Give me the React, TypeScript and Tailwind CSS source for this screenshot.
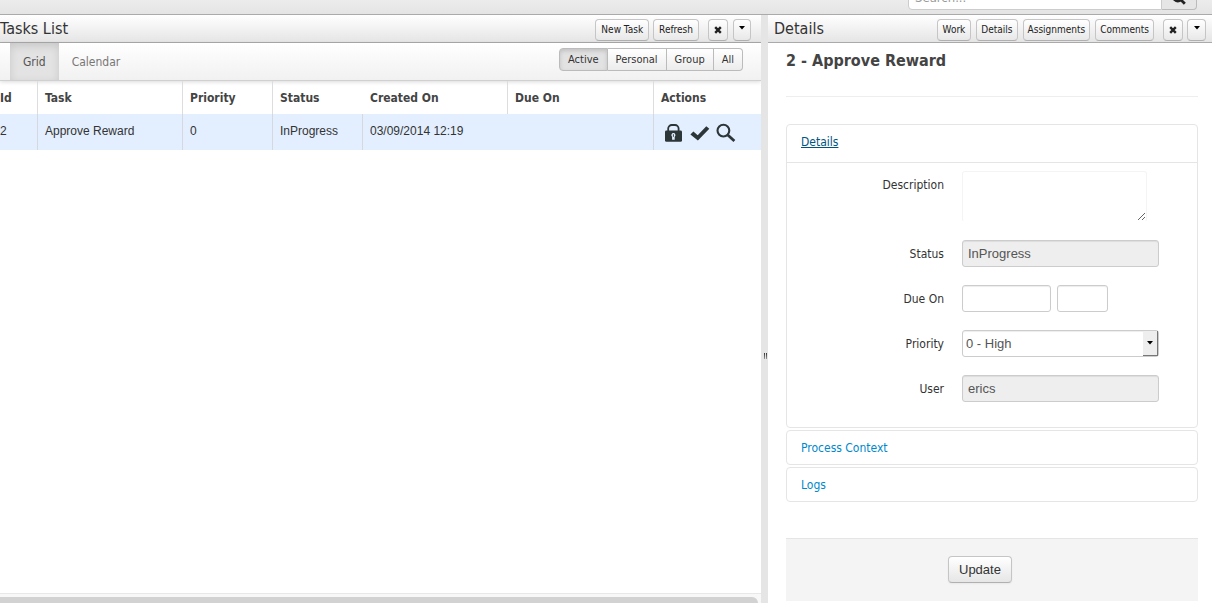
import type { ReactNode } from "react";

const ui = "font-['DejaVu_Sans_Condensed','DejaVu_Sans',sans-serif]";
const arial = "font-['Liberation_Sans',Arial,sans-serif]";

function Caret() {
  return (
    <svg className="h-1 w-[6px]" viewBox="0 0 6 4" aria-hidden="true">
      <path d="M0 0h6L3 3.5z" fill="#000" />
    </svg>
  );
}

function CloseIcon() {
  return (
    <svg className="h-2 w-2" viewBox="0 0 8 8" aria-hidden="true">
      <path d="M1.2 1.2l5.6 5.6M6.8 1.2L1.2 6.8" stroke="#222" strokeWidth="2.4" />
    </svg>
  );
}

function LockIcon() {
  return (
    <svg className="h-5 w-5" viewBox="0 0 20 20" aria-hidden="true">
      <path d="M4.2 9V5.6A3.6 3.6 0 0 1 7.8 2h3.2a3.6 3.6 0 0 1 3.6 3.6V9" fill="none" stroke="#2c3537" strokeWidth="1.8" />
      <rect x="1" y="7.6" width="17" height="11.2" rx="1.4" fill="#2c3537" />
      <path d="M9.4 10a2.1 2.1 0 0 1 1.3 3.7v3.1H8.1v-3.1A2.1 2.1 0 0 1 9.4 10z" fill="#e3efff" />
      <path d="M9.4 11.2v2.6" stroke="#2c3537" strokeWidth=".9" />
    </svg>
  );
}

function CheckIcon() {
  return (
    <svg className="h-5 w-5" viewBox="0 0 20 20" aria-hidden="true">
      <path d="M.4 11.4l3-2.8 4.3 3.7 8.6-9.1 3 2.5L7.9 17.6z" fill="#2c3537" />
    </svg>
  );
}

function SearchIcon() {
  return (
    <svg className="h-5 w-5" viewBox="0 0 20 20" aria-hidden="true">
      <circle cx="7.4" cy="7.6" r="5.9" fill="none" stroke="#2c3537" strokeWidth="2.1" />
      <path d="M11.8 12l6.6 6" stroke="#2c3537" strokeWidth="2.8" />
    </svg>
  );
}

function SmallButton({ children, label, className = "px-1" }: { children: ReactNode; label?: string; className?: string }) {
  return (
    <button
      type="button"
      aria-label={label}
      className={`flex h-[22px] items-center justify-center rounded border border-[#c5c5c5] border-b-[#b0b0b0] bg-linear-to-b from-white to-[#e8e8e8] text-[10px] leading-4 text-[#222] ${className}`}
    >
      {children}
    </button>
  );
}

function PaneHeader({ title, children, className }: { title: string; children: ReactNode; className: string }) {
  return (
    <header className={`flex h-7 shrink-0 items-center border-b border-[#aaa] bg-linear-to-b from-white to-[#e5e5e5] ${className}`}>
      <h2 className="flex-1 pt-px text-base leading-5 text-[#333]">{title}</h2>
      <div className="flex items-center pt-[3px]">{children}</div>
    </header>
  );
}

function Field({ id, label, children }: { id: string; label: string; children: ReactNode }) {
  return (
    <div className="flex gap-[18px]">
      <label htmlFor={id} className="w-[157px] shrink-0 pt-1 text-right text-xs leading-5 text-[#333]">
        {label}
      </label>
      {children}
    </div>
  );
}

const box = "h-[27px] rounded-[3px] border border-[#ccc] text-[13px] text-[#555] shadow-[inset_0_1px_1px_rgba(0,0,0,0.075)]";

const columns = [
  { name: "Id", width: "w-[38px]", value: "2", head: "border-r", cell: "border-r" },
  { name: "Task", width: "w-[145px]", value: "Approve Reward", head: "pl-[7px] border-r", cell: "pl-[7px] border-r" },
  { name: "Priority", width: "w-[90px]", value: "0", head: "pl-[7px] border-r", cell: "pl-[7px] border-r" },
  { name: "Status", width: "w-[90px]", value: "InProgress", head: "pl-[7px]", cell: "pl-[7px] border-r" },
  { name: "Created On", width: "w-[145px]", value: "03/09/2014 12:19", head: "pl-[7px] border-r", cell: "pl-[7px]" },
  { name: "Due On", width: "w-[146px]", value: "", head: "pl-[7px] border-r", cell: "pl-[7px] border-r" },
];

const filters = [
  { name: "Active", style: "rounded-l bg-[#e2e2e2] shadow-[inset_0_2px_4px_rgba(0,0,0,0.15)]" },
  { name: "Personal", style: "border-l-0 bg-linear-to-b from-white to-[#ececec]" },
  { name: "Group", style: "border-l-0 bg-linear-to-b from-white to-[#ececec]" },
  { name: "All", style: "border-l-0 rounded-r bg-linear-to-b from-white to-[#ececec]" },
];

export default function App() {
  return (
    <div className={`flex h-screen flex-col overflow-hidden bg-white ${ui}`}>
      <form className="flex h-[15px] shrink-0 items-end justify-end overflow-hidden border-b border-[#aaa] bg-linear-to-b from-[#ececec] to-[#e4e4e4] pr-[15px] pb-1">
        <input
          type="search"
          aria-label="Search"
          placeholder="Search..."
          className="h-7 w-[254px] shrink-0 rounded-l border border-[#ccc] bg-white px-[6px] pt-[2px] text-[13px] placeholder:text-[#999]"
        />
        <button
          type="button"
          aria-label="Run search"
          className="flex h-7 w-[35px] shrink-0 items-center justify-center rounded-r border border-l-0 border-[#bbb] bg-[#e6e6e6] pt-[3px]"
        >
          <svg className="h-[14px] w-[14px]" viewBox="0 0 12 12" aria-hidden="true">
            <circle cx="5" cy="5" r="3.8" fill="none" stroke="#222" strokeWidth="2" />
            <path d="M7.6 7.6l3.4 3.4" stroke="#222" strokeWidth="2.4" />
          </svg>
        </button>
      </form>

      <div className="grid min-h-0 flex-1 grid-cols-[minmax(0,1fr)_7px_444px]">
        <main className="flex min-h-0 flex-col">
          <PaneHeader title="Tasks List" className="pr-[10px]">
            <div className="flex gap-1">
              <SmallButton className="px-[5px]">New Task</SmallButton>
              <SmallButton className="px-[5px]">Refresh</SmallButton>
            </div>
            <div className="flex gap-[5px] pl-[9px]">
              <SmallButton label="Close" className="w-5">
                <CloseIcon />
              </SmallButton>
              <SmallButton label="More" className="w-[18px] pb-1">
                <Caret />
              </SmallButton>
            </div>
          </PaneHeader>

          <div className="flex h-[38px] shrink-0 items-center border-b border-[#d0d0d0] bg-linear-to-b from-white to-[#f1f1f1] pr-[18px] pl-[10px] shadow-[0_1px_4px_rgba(0,0,0,0.15)]">
            <nav className="flex flex-1 self-stretch text-xs text-[#777]">
              <a href="#grid" className="flex items-center bg-[#e3e3e3] px-[13px] text-[#555] shadow-[inset_0_3px_8px_rgba(0,0,0,0.125)]">
                Grid
              </a>
              <a href="#calendar" className="flex items-center px-[13px]">
                Calendar
              </a>
            </nav>
            <div className="flex pb-1">
              {filters.map((f) => (
                <button key={f.name} type="button" className={`h-[23px] border border-[#bbb] px-2 text-[11px] leading-4 text-[#333] ${f.style}`}>
                  {f.name}
                </button>
              ))}
            </div>
          </div>

          <div className="min-h-0 flex-1">
            <table className="w-full table-fixed border-separate border-spacing-0 text-left">
              <thead>
                <tr className="h-[33px] text-xs text-[#444]">
                  {columns.map((c) => (
                    <th key={c.name} className={`border-[#ddd] font-bold ${c.width} ${c.head}`}>
                      {c.name}
                    </th>
                  ))}
                  <th className="pl-[7px] font-bold">Actions</th>
                </tr>
              </thead>
              <tbody>
                <tr className={`h-9 bg-[#e3efff] text-xs text-[#333] ${arial}`}>
                  {columns.map((c) => (
                    <td key={c.name} className={`border-[#d5d9df] pb-[2px] ${c.cell}`}>
                      {c.value}
                    </td>
                  ))}
                  <td className="pl-[10px]">
                    <div className="flex gap-[6px] pt-px">
                      <button type="button" aria-label="Release">
                        <LockIcon />
                      </button>
                      <button type="button" aria-label="Complete">
                        <CheckIcon />
                      </button>
                      <button type="button" aria-label="View">
                        <SearchIcon />
                      </button>
                    </div>
                  </td>
                </tr>
              </tbody>
            </table>
          </div>

          <div className="h-[10px] shrink-0 overflow-hidden border-t border-[#e8e8e8] bg-[#f8f8f8] pt-[3px] pr-[3px]">
            <div className="h-3 rounded-r-full bg-[#d2d2d2]" />
          </div>
        </main>

        <div className="flex items-center justify-center bg-[#e5e5e5] pt-[94px] pl-px">
          <div className="flex gap-px">
            <span className="h-[6px] w-px bg-linear-to-b from-[#333] to-[#999]" />
            <span className="h-[6px] w-px bg-linear-to-b from-[#333] to-[#999]" />
          </div>
        </div>

        <aside className="flex min-h-0 flex-col overflow-hidden">
          <PaneHeader title="Details" className="pr-[6px] pl-[6px]">
            <div className="flex gap-[5px]">
              <SmallButton className="px-[5px]">Work</SmallButton>
              <SmallButton>Details</SmallButton>
              <SmallButton>Assignments</SmallButton>
              <SmallButton>Comments</SmallButton>
            </div>
            <div className="flex gap-1 pl-[9px]">
              <SmallButton label="Close" className="w-5">
                <CloseIcon />
              </SmallButton>
              <SmallButton label="More" className="w-[19px] pb-1">
                <Caret />
              </SmallButton>
            </div>
          </PaneHeader>

          <div className="flex flex-col pr-[14px] pl-[18px]">
            <h3 className="border-b border-[#eee] pt-2 pb-[25px] text-base leading-5 font-bold text-[#444]">2 - Approve Reward</h3>

            <div className="mt-[27px] flex flex-col gap-[2px] text-xs leading-5 text-[#0088cc]">
              <section className="rounded border border-[#e5e5e5]">
                <div className="border-b border-[#e5e5e5] px-[14px] pt-[7px] pb-[10px]">
                  <a href="#details" className="text-[#005580] underline">
                    Details
                  </a>
                </div>
                <form className="flex flex-col gap-[18px] pt-2 pb-[25px]">
                  <Field id="description" label="Description">
                    <textarea id="description" className="h-[51px] w-[185px] resize rounded-[3px] border border-[#f4f4f4] border-b-transparent" />
                  </Field>
                  <Field id="status" label="Status">
                    <input id="status" readOnly defaultValue="InProgress" className={`w-[197px] bg-[#eee] px-[5px] ${box} ${arial}`} />
                  </Field>
                  <Field id="due-date" label="Due On">
                    <div className="flex gap-[6px]">
                      <input id="due-date" className={`w-[89px] px-[5px] ${box}`} />
                      <input aria-label="Due time" className={`w-[51px] px-[5px] ${box}`} />
                    </div>
                  </Field>
                  <Field id="priority" label="Priority">
                    <div className="relative w-[197px]">
                      <select id="priority" className={`block w-full appearance-none bg-white pl-[3px] ${box} ${arial}`}>
                        <option>0 - High</option>
                        <option>1</option>
                        <option>2</option>
                      </select>
                      <span className="pointer-events-none absolute top-px right-px bottom-px flex w-[15px] items-center justify-center border-r border-b border-[#777] bg-[#eee]">
                        <Caret />
                      </span>
                    </div>
                  </Field>
                  <Field id="user" label="User">
                    <input id="user" readOnly defaultValue="erics" className={`w-[197px] bg-[#eee] px-[5px] ${box} ${arial}`} />
                  </Field>
                </form>
              </section>
              <section className="rounded border border-[#e5e5e5] px-[14px] pt-[7px] pb-[6px]">
                <a href="#context">Process Context</a>
              </section>
              <section className="rounded border border-[#e5e5e5] px-[14px] pt-[7px] pb-[6px]">
                <a href="#logs">Logs</a>
              </section>
            </div>

            <footer className="mt-9 border-t border-[#e5e5e5] bg-[#f4f4f4] pt-[17px] pb-[18px] pl-[162px]">
              <button
                type="button"
                className={`block h-[27px] rounded border border-[#c5c5c5] border-b-[#b0b0b0] bg-linear-to-b from-white to-[#e6e6e6] px-[10px] text-[13px] text-[#333] shadow-[0_1px_2px_rgba(0,0,0,0.05)] ${arial}`}
              >
                Update
              </button>
            </footer>
          </div>
        </aside>
      </div>
    </div>
  );
}
